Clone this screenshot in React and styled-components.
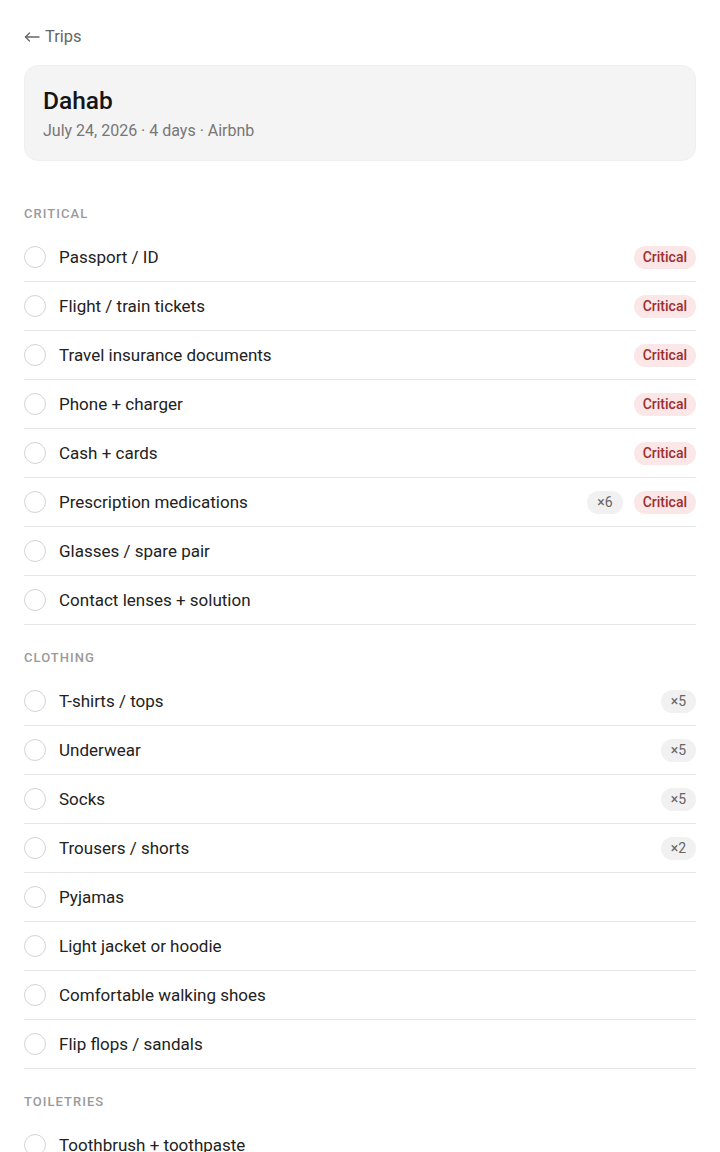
import React from 'react';
import styled, { createGlobalStyle } from 'styled-components';

const GlobalStyle = createGlobalStyle`
  body {
    margin: 0;
    background: #ffffff;
    font-family: Roboto, "Noto Sans", "Liberation Sans", sans-serif;
    color: #1f1f1f;
  }
`;

const SECTIONS = [
  {
    title: 'Critical',
    items: [
      { name: 'Passport / ID', critical: true },
      { name: 'Flight / train tickets', critical: true },
      { name: 'Travel insurance documents', critical: true },
      { name: 'Phone + charger', critical: true },
      { name: 'Cash + cards', critical: true },
      { name: 'Prescription medications', count: 6, critical: true },
      { name: 'Glasses / spare pair' },
      { name: 'Contact lenses + solution' },
    ],
  },
  {
    title: 'Clothing',
    items: [
      { name: 'T-shirts / tops', count: 5 },
      { name: 'Underwear', count: 5 },
      { name: 'Socks', count: 5 },
      { name: 'Trousers / shorts', count: 2 },
      { name: 'Pyjamas' },
      { name: 'Light jacket or hoodie' },
      { name: 'Comfortable walking shoes' },
      { name: 'Flip flops / sandals' },
    ],
  },
  {
    title: 'Toiletries',
    items: [{ name: 'Toothbrush + toothpaste' }],
  },
];

const BackArrow = () => (
  <svg width="16" height="12" viewBox="0 0 16 12" fill="none" stroke="currentColor" strokeWidth="1.3" strokeLinecap="round" strokeLinejoin="round">
    <path d="M15 6H1.5" />
    <path d="M5.5 2L1.5 6l4 4" />
  </svg>
);

const App = () => {
  return (
    <>
      <GlobalStyle />
      <Page>
        <BackLink href="#">
          <BackArrow />
          Trips
        </BackLink>
        <TripCard>
          <TripName>Dahab</TripName>
          <TripMeta>July 24, 2026 · 4 days · Airbnb</TripMeta>
        </TripCard>
        {SECTIONS.map((section) => (
          <Section key={section.title}>
            <SectionLabel>{section.title}</SectionLabel>
            <List>
              {section.items.map((item) => (
                <Item key={item.name}>
                  <Check />
                  <ItemName>{item.name}</ItemName>
                  <Tags>
                    {item.count && <Count>×{item.count}</Count>}
                    {item.critical && <CriticalTag>Critical</CriticalTag>}
                  </Tags>
                </Item>
              ))}
            </List>
          </Section>
        ))}
      </Page>
    </>
  );
};

const Page = styled.main`
  padding: 25px 24px 24px;
  max-width: 672px;
`;

const BackLink = styled.a`
  display: inline-flex;
  align-items: center;
  gap: 5px;
  font-size: 16.5px;
  line-height: 24px;
  color: #666;
  text-decoration: none;
  margin-bottom: 16px;

  svg {
    flex: none;
  }
`;

const TripCard = styled.header`
  background: #f4f4f4;
  border: 1px solid #efefef;
  border-radius: 14px;
  padding: 21px 18px 19px;
  margin-bottom: 21px;
`;

const TripName = styled.h1`
  margin: 0;
  font-size: 24.5px;
  line-height: 28px;
  font-weight: 500;
  color: #151515;
`;

const TripMeta = styled.p`
  margin: 6px 0 0;
  font-size: 16px;
  line-height: 20px;
  color: #777;
`;

const Section = styled.section`
  padding-top: 24px;

  & + & {
    padding-top: 25px;
  }
`;

const SectionLabel = styled.h2`
  margin: 0 0 11px;
  font-size: 13px;
  line-height: 16px;
  font-weight: 500;
  letter-spacing: 0.08em;
  text-transform: uppercase;
  color: #9a9a9a;
`;

const List = styled.ul`
  list-style: none;
  margin: 0;
  padding: 0;
`;

const Item = styled.li`
  display: flex;
  align-items: center;
  height: 48px;
  border-bottom: 1px solid #e6e6e6;
`;

const Check = styled.span`
  flex: none;
  width: 22px;
  height: 22px;
  box-sizing: border-box;
  border: 1.5px solid #d4d4d4;
  border-radius: 50%;
  margin-right: 13px;
`;

const ItemName = styled.span`
  flex: 1;
  font-size: 17px;
  color: #222;
`;

const Tags = styled.span`
  display: flex;
  align-items: center;
  gap: 11px;
`;

const Pill = styled.span`
  display: inline-flex;
  align-items: center;
  height: 23px;
  border-radius: 12px;
  font-size: 14px;
`;

const Count = styled(Pill)`
  padding: 0 10px;
  background: #f1f1f1;
  color: #666;
`;

const CriticalTag = styled(Pill)`
  padding: 0 9px;
  background: #fbe7e7;
  color: #9e2e2e;
  font-weight: 500;
`;

export default App;
